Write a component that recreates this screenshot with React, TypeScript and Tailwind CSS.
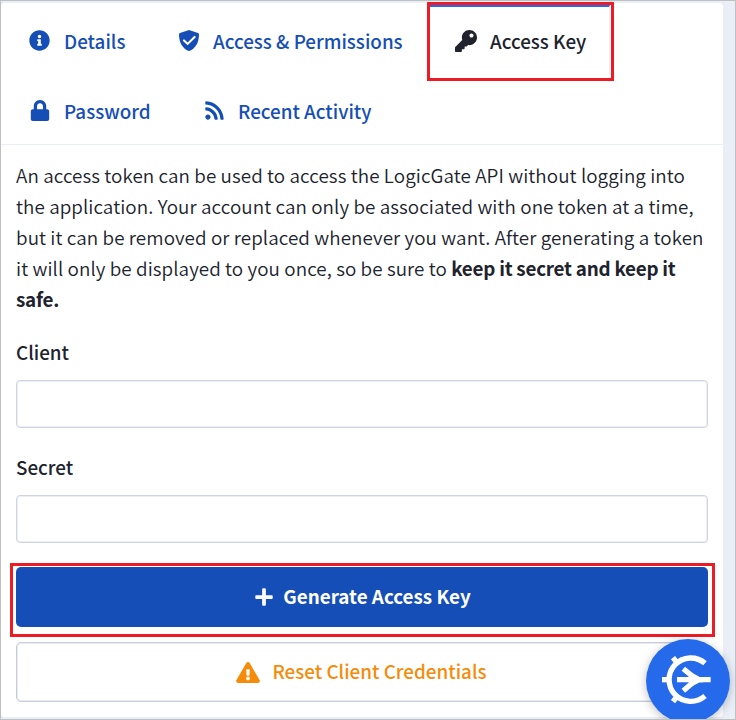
import type { ReactNode } from "react";
import { FaInfoCircle, FaLock, FaRss, FaKey, FaPlus, FaExclamationTriangle } from "react-icons/fa";

function ShieldCheck() {
  return (
    <svg viewBox="0 0 20 21" className="h-[21px] w-5">
      <path
        d="M10 0 L19 3.1 Q20 3.5 20 4.6 C20 12.5 16.5 18.4 10.9 20.8 Q10 21.1 9.1 20.8 C3.5 18.4 0 12.5 0 4.6 Q0 3.5 1 3.1 Z"
        fill="currentColor"
      />
      <path d="M5 10.4 L8.6 13.9 L15.6 6.9" fill="none" stroke="#fff" strokeWidth="2.1" strokeLinecap="round" />
    </svg>
  );
}

function Line({ children }: { children: ReactNode }) {
  return <span className="block whitespace-nowrap">{children}</span>;
}

function ChatLogo() {
  return (
    <svg viewBox="90 87 252 252" className="block h-[84px] w-[84px]">
      <circle cx="216" cy="213" r="126" fill="#256aeb" />
      <g fill="none" stroke="#fff" strokeWidth="16">
        <path d="M267 160 A65 65 0 1 0 267 258" />
        <path d="M138 209 H162" />
        <path d="M171 143 L183 158" />
        <path d="M171 275 L183 260" />
        <path d="M183 209 H284" />
        <path d="M202 176 L222 193 Q231 201 246 207" />
        <path d="M202 242 L222 225 Q231 217 246 211" />
      </g>
      <path d="M218 190 Q236 202 262 202 V217 Q236 216 218 229 Z" fill="#fff" />
    </svg>
  );
}

export default function App() {
  return (
    <div className="relative h-[720px] w-[736px] overflow-hidden border border-[#c0c0c0] bg-[#e9eef7] pt-0.5 font-['Noto_Sans_CJK_SC','Noto_Sans',sans-serif] text-[18.82px] text-[#20232d]">
      <div className="h-[714px] w-[722px] rounded-[4px] bg-white">
        <nav className="h-[141px] font-medium text-[#144eb6]">
          <div className="flex h-[70px]">
            <div className="flex h-[75px] w-[150px] items-center pl-7">
              <FaInfoCircle className="h-[21px] w-[21px]" />
              <span className="ml-3.5 leading-[30px]">Details</span>
            </div>
            <div className="flex h-[75px] w-[279px] items-center pl-7">
              <ShieldCheck />
              <span className="ml-3.5 whitespace-nowrap leading-[30px]">Access &amp; Permissions</span>
            </div>
            <div className="-ml-[3px] -mt-px h-[79px] w-[187px] border-[3px] border-[#ed1c24]">
              <div className="flex h-[70px] w-[180px] items-center border-r border-t-2 border-r-[#e9eef7] border-t-[#256aeb] pl-[25px] text-[#20232d]">
                <FaKey className="h-[22px] w-[22px]" />
                <span className="ml-[13px] whitespace-nowrap leading-[30px]">Access Key</span>
              </div>
            </div>
          </div>
          <div className="flex h-[71px]">
            <div className="flex h-[75px] w-[175px] items-center pl-[29px]">
              <FaLock className="h-[21px] w-5" />
              <span className="ml-3.5 leading-[30px]">Password</span>
            </div>
            <div className="flex h-[75px] items-center pl-7">
              <FaRss className="h-[21px] w-[21px]" />
              <span className="ml-[13px] whitespace-nowrap leading-[30px]">Recent Activity</span>
            </div>
          </div>
        </nav>
        <main className="border-t border-[#e9eef7] px-[15px] pt-3.5">
          <p className="font-[350] leading-[31px] tracking-[0.08px]">
            <Line>An access token can be used to access the LogicGate API without logging into</Line>
            <Line>the application. Your account can only be associated with one token at a time,</Line>
            <Line>but it can be removed or replaced whenever you want. After generating a token</Line>
            <Line>it will only be displayed to you once, so be sure to <b className="font-bold tracking-[-0.23px]">keep it secret and keep it</b></Line>
            <Line><b className="font-bold tracking-[-0.23px]">safe.</b></Line>
          </p>
          <label className="mt-[22px] block font-medium leading-[31px]">Client</label>
          <input className="mt-[13px] block h-12 w-full rounded-[4px] border border-[#d0d4e0] shadow-[inset_0_0_0_1px_#eceef4]" />
          <label className="mt-[23px] block font-medium leading-[31px]">Secret</label>
          <input className="mt-[13px] block h-12 w-full rounded-[4px] border border-[#d0d4e0] shadow-[inset_0_0_0_1px_#eceef4]" />
          <div className="-mx-1.5 mt-5 h-[74px] w-[705px] border-[3px] border-[#ed1c24] pl-[3px] pt-px">
            <button className="flex h-[60px] w-[692px] items-center justify-center rounded-[5px] bg-[#144eb6] pl-0.5 font-bold text-white">
              <FaPlus className="h-5 w-[18px]" />
              <span className="-mt-0.5 ml-2.5">Generate Access Key</span>
            </button>
          </div>
          <button className="mt-[5px] flex h-[60px] w-full items-center justify-center rounded-[5px] border border-[#c8cbdc] pr-px font-medium text-[#f68b0a] shadow-[inset_0_0_0_1px_#e9ebf2]">
            <FaExclamationTriangle className="h-[21px] w-6" />
            <span className="-mt-0.5 ml-3">Reset Client Credentials</span>
          </button>
        </main>
      </div>
      <div className="absolute left-[645px] top-[638px] rounded-full shadow-[0_2px_10px_rgba(0,0,0,0.25)]">
        <ChatLogo />
      </div>
    </div>
  );
}
